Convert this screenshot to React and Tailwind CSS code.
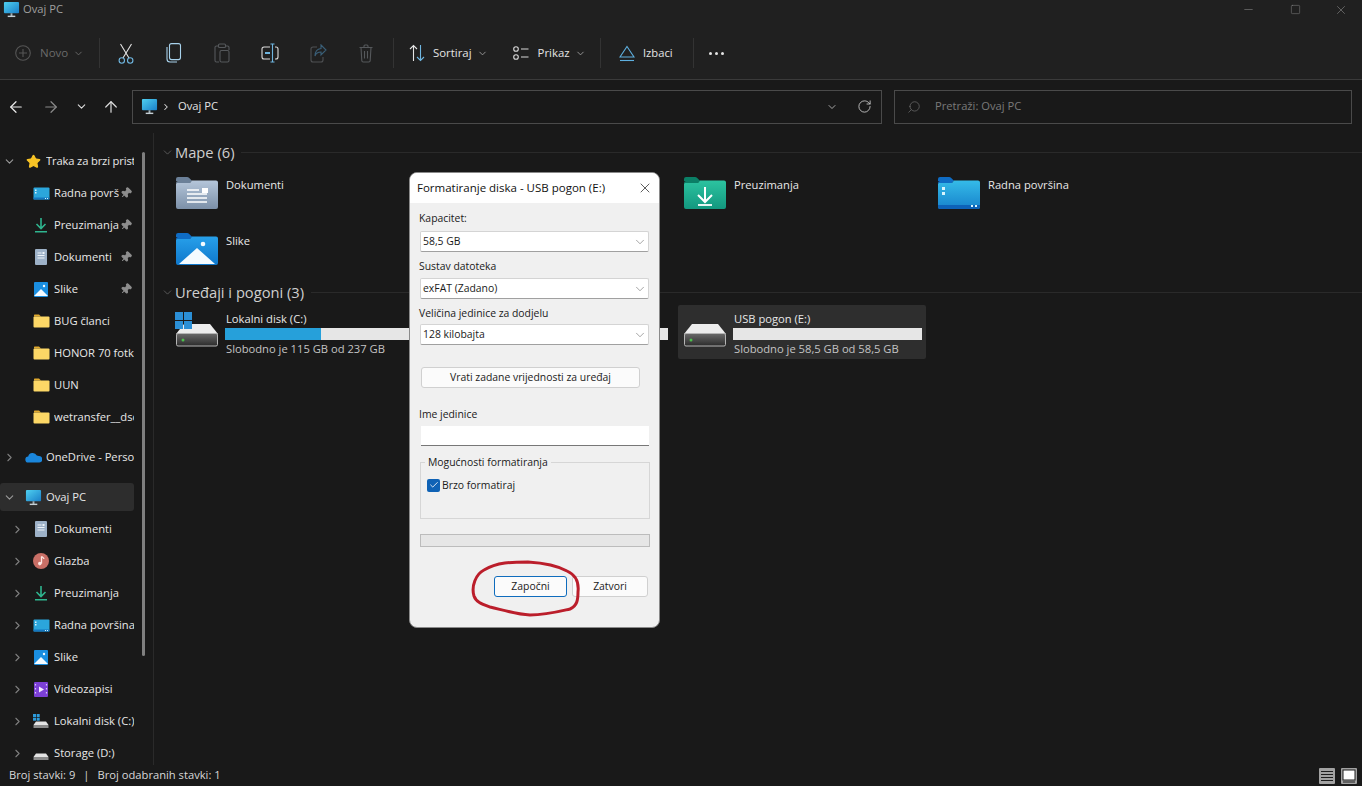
import React from "react";
import { ChevronDown, ChevronRight, ArrowLeft, ArrowRight, ArrowUp, RotateCw, Search, Pin, Star, X, Check, Minus, Square } from "lucide-react";

const FONT = "font-['Open_Sans','Noto_Sans',sans-serif]";

function PcIcon({ s = 17 }) {
  return (
    <svg width={s} height={s} viewBox="0 0 18 18" className="shrink-0">
      <defs>
        <linearGradient id="pcg" x1="0" y1="0" x2="1" y2="1"><stop offset="0" stopColor="#4fd0f0" /><stop offset="1" stopColor="#1a7fc8" /></linearGradient>
      </defs>
      <rect x="1" y="1" width="16" height="12" rx="1" fill="url(#pcg)" />
      <rect x="8" y="13" width="2" height="3" fill="#9fb0b8" />
      <rect x="5" y="15.5" width="8" height="1.5" fill="#c6d0d6" />
    </svg>
  );
}

function SmallFolder() {
  return (
    <svg width="17" height="14" viewBox="0 0 17 14" className="shrink-0">
      <path d="M1 1.5C1 .9 1.4.5 2 .5h4l2 2H1z" fill="#e0a92e" />
      <rect x="0.5" y="2.5" width="16" height="11" rx="1" fill="#fcd766" />
    </svg>
  );
}

function SmallDesktop() {
  return (
    <svg width="17" height="13" viewBox="0 0 17 13" className="shrink-0">
      <rect x="0.5" y="0.5" width="16" height="12" rx="1" fill="#2ba6dc" />
      <rect x="0.5" y="10.5" width="16" height="2" fill="#1577bf" />
      <rect x="2" y="2.5" width="1.5" height="1.5" fill="#d7f2fb" />
      <rect x="2" y="5" width="1.5" height="1.5" fill="#d7f2fb" />
      <rect x="12" y="11" width="1" height="1" fill="#d7f2fb" />
      <rect x="14" y="11" width="1" height="1" fill="#d7f2fb" />
    </svg>
  );
}
function SmallDownload() {
  return (
    <svg width="14" height="16" viewBox="0 0 14 16" className="shrink-0">
      <path d="M7 1v10M2.5 7 7 11.5 11.5 7" stroke="#2fb58f" strokeWidth="1.6" fill="none" />
      <rect x="1" y="14" width="12" height="1.5" fill="#2fb58f" />
    </svg>
  );
}
function SmallDoc() {
  return (
    <svg width="12" height="16" viewBox="0 0 12 16" className="shrink-0">
      <rect width="12" height="16" rx="1" fill="#9db1c7" />
      <path d="M2.5 4h4M2.5 6.5h7M2.5 9h7" stroke="#eef3f8" strokeWidth="1" />
      <rect x="7.5" y="3" width="2" height="2" fill="#eef3f8" />
    </svg>
  );
}
function SmallPicture() {
  return (
    <svg width="14" height="15" viewBox="0 0 14 15" className="shrink-0">
      <rect width="14" height="15" rx="1" fill="#1a8ee0" />
      <path d="M0 14 7 7l7 7z" fill="#f4fbff" />
      <circle cx="10" cy="4" r="1.2" fill="#f4fbff" />
    </svg>
  );
}
function SmallMusic() {
  return (
    <svg width="16" height="16" viewBox="0 0 16 16" className="shrink-0">
      <circle cx="8" cy="8" r="8" fill="#c96f66" />
      <path d="M8.5 3.5v7" stroke="#fde8e4" strokeWidth="1.3" />
      <circle cx="6.8" cy="10.6" r="1.8" fill="#fde8e4" />
      <path d="M8.5 3.5c1 1 2.2 1 2.5 2.5" stroke="#fde8e4" strokeWidth="1.2" fill="none" />
    </svg>
  );
}
function SmallVideo() {
  return (
    <svg width="14" height="15" viewBox="0 0 14 15" className="shrink-0">
      <rect width="14" height="15" rx="1" fill="#7c3fd6" />
      <path d="M5 4.5v6l5-3z" fill="#f3e9ff" />
      <path d="M1.5 2v1.5M1.5 6v1.5M1.5 10v1.5M12.5 2v1.5M12.5 6v1.5M12.5 10v1.5" stroke="#d9c6f8" strokeWidth="1.2" />
    </svg>
  );
}
function SmallDisk({ win }) {
  return (
    <svg width="16" height="15" viewBox="0 0 16 15" className="shrink-0">
      {win && <g fill="#2c9bdb"><rect x="0" y="0" width="3" height="3" /><rect x="3.7" y="0" width="3" height="3" /><rect x="0" y="3.7" width="3" height="3" /><rect x="3.7" y="3.7" width="3" height="3" /></g>}
      <path d="M3 7.5h10l2.5 3.5h-15z" fill="#e3e3e3" />
      <rect x="0.5" y="11" width="15" height="3" fill="#8a8a8a" />
    </svg>
  );
}
function OneDrive() {
  return (
    <svg width="17" height="11" viewBox="0 0 17 11" className="shrink-0">
      <path d="M3.5 10.5a3 3 0 0 1-.3-6 4.6 4.6 0 0 1 8.6-1 3.6 3.6 0 0 1 2 .6 3.2 3.2 0 0 1 .5 6.4z" fill="#1a86dc" />
    </svg>
  );
}

function BigFolder({ id, tab, from, to, children }) {
  return (
    <svg width="42" height="34" viewBox="0 0 42 34" className="shrink-0">
      <defs>
        <linearGradient id={id} x1="0" y1="0" x2="0" y2="1"><stop offset="0" stopColor={from} /><stop offset="1" stopColor={to} /></linearGradient>
      </defs>
      <path d="M0 3a2 2 0 0 1 2-2h9c1 0 1.600.4 2.200 1l3 3H0z" fill={tab} />
      <path d="M0 7a2 2 0 0 1 2-2h14l-2 2z" fill={tab} />
      <path d="M0 8a1 1 0 0 1 1-1h13l2-2.500h24a2 2 0 0 1 2 2V31a2 2 0 0 1-2 2H2a2 2 0 0 1-2-2z" fill={`url(#${id})`} />
      {children}
    </svg>
  );
}
const DocsFolder = () => (
  <BigFolder id="f1" tab="#6b8098" from="#b5c6da" to="#7c90a8">
    <path d="M11 14h12M11 18h20M11 22h20M11 26h20" stroke="#fff" strokeWidth="1.500" />
    <rect x="26" y="12" width="6" height="5" fill="#fff" />
  </BigFolder>
);
const PicsFolder = () => (
  <BigFolder id="f2" tab="#0f6cc4" from="#27a0ea" to="#0f78cc">
    <path d="M3 32 21 16l18 16z" fill="#f4fbff" />
    <circle cx="27" cy="12" r="2.300" fill="#f4fbff" />
  </BigFolder>
);
const DownFolder = () => (
  <BigFolder id="f3" tab="#0b7f66" from="#2cc3a0" to="#13987f">
    <path d="M21 11v14M14 19l7 7 7-7" stroke="#fff" strokeWidth="2" fill="none" />
    <path d="M14 29h14" stroke="#fff" strokeWidth="1.800" />
  </BigFolder>
);
const DeskFolder = () => (
  <BigFolder id="f4" tab="#0f6cc4" from="#35bbe8" to="#1783cc">
    <rect x="4" y="11" width="3" height="3" fill="#d9f5fd" />
    <rect x="4" y="16" width="3" height="3" fill="#d9f5fd" />
    <path d="M0 29h42v2a2 2 0 0 1-2 2H2a2 2 0 0 1-2-2z" fill="#0d62b8" />
    <rect x="33" y="29" width="2" height="2" fill="#d9f5fd" />
    <rect x="37" y="29" width="2" height="2" fill="#d9f5fd" />
  </BigFolder>
);

function BigDrive({ id, win }) {
  return (
    <svg width="42" height="36" viewBox="0 0 42 36" className="shrink-0 -mt-[4px] overflow-visible">
      <defs>
        <linearGradient id={id} x1="0" y1="0" x2="0" y2="1"><stop offset="0" stopColor="#6a6a6a" /><stop offset="1" stopColor="#2b2b2b" /></linearGradient>
      </defs>
      <path d="M8 12h26l8 10H0z" fill="#ededed" />
      <rect x="0.500" y="21.500" width="41" height="12.500" rx="1.500" fill={`url(#${id})`} stroke="#b5b5b5" />
      <circle cx="7" cy="28" r="1.500" fill="#4cc04c" />
      {win && (
        <g fill="#2b8fd6">
          <rect x="-1" y="0" width="8" height="8" />
          <rect x="8" y="0" width="8" height="8" />
          <rect x="-1" y="9" width="8" height="8" />
          <rect x="8" y="9" width="8" height="8" />
        </g>
      )}
    </svg>
  );
}

function ToolSep() {
  return <div className="w-px h-[30px] bg-[#333333] shrink-0" />;
}
function ToolBtn({ children }) {
  return <div className="w-[48px] h-[30px] flex items-center justify-center shrink-0">{children}</div>;
}

function CopyIcon({ c }) {
  return (
    <svg width="16" height="20" viewBox="0 0 16 20" fill="none" stroke={c} strokeWidth="1.100">
      <rect x="3.500" y="0.600" width="11" height="16" rx="2" />
      <path d="M1 4v12a3 3 0 0 0 3 3h7" />
    </svg>
  );
}
function PasteIcon({ c }) {
  return (
    <svg width="16" height="20" viewBox="0 0 16 20" fill="none" stroke={c} strokeWidth="1.100">
      <path d="M4 3H2.500A1.500 1.500 0 0 0 1 4.500v13A1.500 1.500 0 0 0 2.500 19H5M12 3h1.500A1.500 1.500 0 0 1 15 4.500V7" />
      <rect x="4.500" y="1" width="7" height="3.500" rx="1" />
      <rect x="6" y="7.500" width="9" height="11.500" rx="1.500" />
    </svg>
  );
}
function RenameIcon() {
  return (
    <svg width="18" height="20" viewBox="0 0 18 20" fill="none" strokeWidth="1.100">
      <path d="M9 4H3a2 2 0 0 0-2 2v8a2 2 0 0 0 2 2h6M14 4h1a2 2 0 0 1 2 2v8a2 2 0 0 1-2 2h-1" stroke="#dcdcdc" />
      <path d="M11.500 1v18M9.500 1h4M9.500 19h4" stroke="#6fb6e0" />
      <path d="M4 10h5" stroke="#6fb6e0" strokeWidth="2" />
    </svg>
  );
}
function ShareIcon() {
  return (
    <svg width="17" height="19" viewBox="0 0 17 19" fill="none" stroke="#4e5053" strokeWidth="1.100">
      <path d="M7 3H3a2 2 0 0 0-2 2v11a2 2 0 0 0 2 2h8a2 2 0 0 0 2-2v-3" />
      <path d="M11 1l5 5-5 5V8c-3 0-5 1-6 4 0-5 2-7 6-7.500z" stroke="#3a5f78" />
    </svg>
  );
}
function TrashIcon() {
  return (
    <svg width="14" height="19" viewBox="0 0 14 19" fill="none" stroke="#55585b" strokeWidth="1.100">
      <path d="M0.500 3.500h13M5 3.500V2a1 1 0 0 1 1-1h2a1 1 0 0 1 1 1v1.500" />
      <path d="M2 3.500l.8 13a1.500 1.500 0 0 0 1.500 1.500h5.400a1.500 1.500 0 0 0 1.500-1.500l.8-13" />
      <path d="M5.500 7v7.500M8.500 7v7.500" />
    </svg>
  );
}
function SortIcon() {
  return (
    <svg width="16" height="18" viewBox="0 0 16 18" fill="none" strokeWidth="1.100">
      <path d="M4.500 17V1.500M1 5l3.500-3.500L8 5" stroke="#e4e4e4" />
      <path d="M11.500 1v15.500M8 13l3.500 3.500L15 13" stroke="#6fb6e0" />
    </svg>
  );
}
function ViewIcon() {
  return (
    <svg width="16" height="14" viewBox="0 0 16 14" fill="none" stroke="#d8d8d8" strokeWidth="1.100">
      <circle cx="3" cy="3" r="2.300" />
      <circle cx="3" cy="11" r="2.300" />
      <path d="M8 3h7.500M8 11h7.500" />
    </svg>
  );
}
function EjectIcon() {
  return (
    <svg width="16" height="17" viewBox="0 0 16 17" fill="none" stroke="#5eb0e0" strokeWidth="1.100">
      <path d="M8 1.500 15 12H1z" />
      <path d="M1 15.500h14" />
    </svg>
  );
}

function TreeRow({ chev, indent, icon, label, pin, active, tight }) {
  const top = !indent;
  return (
    <div className="h-[32px] w-[134px] flex items-center relative overflow-hidden shrink-0">
      {active && <div className="absolute left-0 right-0 top-[2px] bottom-[2px] bg-[#2d2d2d] rounded-[3px]" />}
      <div className={`relative shrink-0 flex items-center justify-center ${top ? "w-[18px]" : "w-[26px] pl-[8px]"}`}>
        {chev === "down" && <ChevronDown size={13} color="#9a9a9a" strokeWidth={2} />}
        {chev === "right" && <ChevronRight size={13} color="#7f7f7f" strokeWidth={2} />}
      </div>
      <div className={`relative shrink-0 flex items-center justify-center ${top ? "w-[16px] ml-[7px] mr-[5px]" : "w-[18px] ml-[6px] mr-[4px]"}`}>{icon}</div>
      <div className={`relative whitespace-nowrap overflow-hidden text-[11.2px] text-[#e8e8e8] ${pin ? "w-[65px]" : ""} ${tight ? "tracking-[-0.15px]" : ""}`}>{label}</div>
      {pin && (
        <div className="absolute right-[2px] top-[10px]">
          <Pin size={12} color="#8d8d8d" fill="#8d8d8d" className="rotate-45" />
        </div>
      )}
    </div>
  );
}

function Section({ title, children }) {
  return (
    <div>
      <div className="h-[20px] flex items-center">
        <ChevronDown size={13} color="#777777" strokeWidth={1.200} className="mr-[1px] shrink-0" />
        <span className="text-[14.7px] text-[#cfcfcf] whitespace-nowrap">{title}</span>
        <div className="h-px flex-1 bg-[#2a2a2a] ml-[7px]" />
      </div>
      {children}
    </div>
  );
}

function FolderItem({ icon, label }) {
  return (
    <div className="h-[56px] w-[248px] pl-[8px] pt-[4px] flex items-start gap-[8px]">
      <div className="mt-[2px]">{icon}</div>
      <span className="text-[11.2px] text-[#e8e8e8] mt-[3px] leading-[16px]">{label}</span>
    </div>
  );
}

function DriveItem({ icon, name, used, sub, selected }) {
  return (
    <div className={`h-[54px] w-[248px] pl-[6px] flex items-center gap-[8px] rounded-[2px] ${selected ? "bg-[#2e2e2e]" : ""}`}>
      {icon}
      <div className="flex-1 pr-[4px] pt-[3px]">
        <div className="h-[16px] text-[11.2px] text-[#e8e8e8] leading-[16px]">{name}</div>
        <div className="h-[12px] bg-[#e6e6e6] mt-[1px] -ml-[1px]">
          <div className="h-full bg-[#26a0da]" style={{ width: used }} />
        </div>
        <div className="h-[16px] text-[11.2px] text-[#c4c4c4] leading-[16px] mt-[1px]">{sub}</div>
      </div>
    </div>
  );
}

function Select({ value }) {
  return (
    <div className="h-[21px] w-[229px] ml-[1px] bg-white border border-[#d4d4d4] border-b-[#a0a0a0] rounded-[2px] flex items-center pl-[2px] pr-[1px]">
      <span className="flex-1 text-[#1a1a1a]">{value}</span>
      <ChevronDown size={14} color="#666666" strokeWidth={1} />
    </div>
  );
}

function Dialog() {
  return (
    <div className="absolute left-[409px] top-[172px] w-[251px] h-[456px] rounded-[8px] overflow-hidden bg-[#f0f0f0] border border-[#8a8a8a] text-[10.4px] text-[#1a1a1a] flex flex-col">
      <div className="h-[30px] bg-white flex items-center pl-[7px] pr-[6px] shrink-0">
        <span className="flex-1 text-[11.5px] text-[#111111] whitespace-nowrap">Formatiranje diska - USB pogon (E:)</span>
        <X size={16} color="#222222" strokeWidth={1.100} />
      </div>
      <div className="pl-[9px] flex-1 flex flex-col">
        <div className="h-[14px] mt-[8px] leading-[14px]">Kapacitet:</div>
        <div className="mt-[6px]"><Select value="58,5 GB" /></div>
        <div className="h-[14px] mt-[7px] leading-[14px]">Sustav datoteka</div>
        <div className="mt-[5px]"><Select value="exFAT (Zadano)" /></div>
        <div className="h-[14px] mt-[7px] leading-[14px]">Veličina jedinice za dodjelu</div>
        <div className="mt-[4px]"><Select value="128 kilobajta" /></div>
        <div className="h-[21px] w-[219px] ml-[2px] mt-[22px] bg-[#fbfbfb] border border-[#d0d0d0] rounded-[3px] flex items-center justify-center">Vrati zadane vrijednosti za uređaj</div>
        <div className="h-[14px] mt-[19px] leading-[14px]">Ime jedinice</div>
        <div className="h-[20px] w-[228px] ml-[2px] mt-[5px] bg-white border-b border-b-[#777777]" />
        <div className="relative w-[230px] h-[57px] mt-[16px] ml-[1px] border border-[#d6d6d6]">
          <span className="absolute left-[4px] top-[-8px] px-[3px] bg-[#f0f0f0] leading-[14px]">Mogućnosti formatiranja</span>
          <div className="flex items-center mt-[15px] ml-[6px]">
            <div className="w-[13px] h-[13px] rounded-[2px] bg-[#0f62b5] flex items-center justify-center shrink-0">
              <Check size={10} color="#ffffff" strokeWidth={2} />
            </div>
            <span className="ml-[2px] leading-[14px]">Brzo formatiraj</span>
          </div>
        </div>
        <div className="w-[230px] h-[13px] mt-[15px] ml-[1px] bg-[#e6e6e6] border border-[#bcbcbc]" />
        <div className="flex mt-[29px] ml-[75px]">
          <div className="w-[73px] h-[21px] rounded-[3px] bg-[#fbfbfb] border border-[#0f6cbd] flex items-center justify-center">Započni</div>
          <div className="w-[76px] h-[21px] ml-[5px] rounded-[3px] bg-[#fbfbfb] border border-[#d0d0d0] flex items-center justify-center">Zatvori</div>
        </div>
      </div>
    </div>
  );
}

export default function App() {
  return (
    <div className={`relative w-[1362px] h-[786px] overflow-hidden flex flex-col bg-[#191919] ${FONT}`}>
      <div className="h-[80px] bg-[#202020] border-b border-[#3a3a3a] shrink-0 flex flex-col">
        <div className="h-[27px] pb-[8px] flex items-center shrink-0 pl-[3px]">
          <PcIcon s={17} />
          <span className="text-[11.2px] text-[#9f9f9f] ml-[3px]">Ovaj PC</span>
          <div className="flex-1" />
          <div className="flex items-center">
            <Minus size={13} color="#8f8f8f" strokeWidth={1} className="mr-[35px]" />
            <Square size={11} color="#8f8f8f" strokeWidth={1} className="mr-[33px]" />
            <X size={14} color="#8f8f8f" strokeWidth={1} className="mr-[14px]" />
          </div>
        </div>
        <div className="flex-1 flex items-center">
          <div className="w-[99px] flex items-center shrink-0 pl-[15px]">
            <svg width="16" height="16" viewBox="0 0 16 16" fill="none" stroke="#555555" strokeWidth="1.100">
              <circle cx="8" cy="8" r="7.300" /><path d="M8 4v8M4 8h8" />
            </svg>
            <span className="text-[11.5px] text-[#6b6b6b] ml-[9px]">Novo</span>
            <ChevronDown size={11} color="#6b6b6b" className="ml-[5px]" />
          </div>
          <ToolSep />
          <div className="w-[2px] shrink-0" />
          <ToolBtn>
            <svg width="16" height="21" viewBox="0 0 16 21" fill="none" strokeWidth="1.100">
              <path d="M2.500 1 11 15M13.500 1 5 15" stroke="#e4e4e4" />
              <circle cx="3.800" cy="17.500" r="2.700" stroke="#6fb6e0" />
              <circle cx="12.200" cy="17.500" r="2.700" stroke="#6fb6e0" />
            </svg>
          </ToolBtn>
          <ToolBtn><CopyIcon c="#a8d2ec" /></ToolBtn>
          <ToolBtn><PasteIcon c="#55585b" /></ToolBtn>
          <ToolBtn><RenameIcon /></ToolBtn>
          <ToolBtn><ShareIcon /></ToolBtn>
          <ToolBtn><TrashIcon /></ToolBtn>
          <div className="w-[3px] shrink-0" />
          <ToolSep />
          <div className="w-[206px] flex items-center shrink-0 pl-[15px]">
            <SortIcon />
            <span className="text-[11.4px] font-medium text-[#e4e4e4] ml-[8px]">Sortiraj</span>
            <ChevronDown size={11} color="#9a9a9a" className="ml-[5px]" />
            <div className="ml-[25px]"><ViewIcon /></div>
            <span className="text-[11.4px] font-medium text-[#e4e4e4] ml-[9px]">Prikaz</span>
            <ChevronDown size={11} color="#9a9a9a" className="ml-[5px]" />
          </div>
          <ToolSep />
          <div className="w-[92px] flex items-center shrink-0 pl-[18px]">
            <EjectIcon />
            <span className="text-[11.2px] font-medium text-[#e4e4e4] ml-[8px]">Izbaci</span>
          </div>
          <ToolSep />
          <div className="ml-[15px] flex gap-[3px]">
            <div className="w-[3px] h-[3px] rounded-full bg-[#e4e4e4]" />
            <div className="w-[3px] h-[3px] rounded-full bg-[#e4e4e4]" />
            <div className="w-[3px] h-[3px] rounded-full bg-[#e4e4e4]" />
          </div>
        </div>
      </div>

      <div className="h-[53px] shrink-0 flex items-center">
        <div className="w-[132px] flex items-center shrink-0 pl-[7px]">
          <ArrowLeft size={18} color="#ececec" strokeWidth={1.600} />
          <ArrowRight size={18} color="#8a8a8a" strokeWidth={1.600} className="ml-[17px]" />
          <ChevronDown size={13} color="#dcdcdc" strokeWidth={2} className="ml-[15px]" />
          <ArrowUp size={18} color="#dcdcdc" strokeWidth={1.600} className="ml-[14px]" />
        </div>
        <div className="w-[750px] h-[34px] border border-[#4a4a4a] flex items-center pl-[8px] shrink-0">
          <PcIcon s={17} />
          <ChevronRight size={10} color="#dcdcdc" strokeWidth={2.500} className="ml-[3px]" />
          <span className="text-[11.2px] text-[#e4e4e4] ml-[7px]">Ovaj PC</span>
          <div className="flex-1" />
          <ChevronDown size={12} color="#c8c8c8" strokeWidth={1.600} />
          <RotateCw size={15} color="#c8c8c8" strokeWidth={1.400} className="ml-[19px] mr-[9px]" />
        </div>
        <div className="w-[458px] h-[34px] ml-[12px] border border-[#4a4a4a] flex items-center pl-[12px] shrink-0">
          <Search size={14} color="#6a6a6a" strokeWidth={1.300} className="-scale-x-100" />
          <span className="text-[11.2px] text-[#7a7a7a] ml-[14px]">Pretraži: Ovaj PC</span>
        </div>
      </div>

      <div className="flex-1 min-h-0 flex relative">
        <div className="w-[154px] shrink-0 border-r border-[#2a2a2a] pt-[12px] overflow-hidden flex flex-col relative">
          <TreeRow tight chev="down" icon={<Star size={15} color="#f7c325" fill="#f7c325" />} label="Traka za brzi pristup" />
          <TreeRow indent icon={<SmallDesktop />} label="Radna površina" pin />
          <TreeRow indent icon={<SmallDownload />} label="Preuzimanja" pin />
          <TreeRow indent icon={<SmallDoc />} label="Dokumenti" pin />
          <TreeRow indent icon={<SmallPicture />} label="Slike" pin />
          <TreeRow indent icon={<SmallFolder />} label="BUG članci" />
          <TreeRow indent icon={<SmallFolder />} label="HONOR 70 fotke" />
          <TreeRow indent icon={<SmallFolder />} label="UUN" />
          <TreeRow indent icon={<SmallFolder />} label="wetransfer__dsc" />
          <div className="h-[8px] shrink-0" />
          <TreeRow chev="right" icon={<OneDrive />} label="OneDrive - Personal" />
          <div className="h-[8px] shrink-0" />
          <TreeRow chev="down" active icon={<PcIcon s={17} />} label="Ovaj PC" />
          <TreeRow indent chev="right" icon={<SmallDoc />} label="Dokumenti" />
          <TreeRow indent chev="right" icon={<SmallMusic />} label="Glazba" />
          <TreeRow indent chev="right" icon={<SmallDownload />} label="Preuzimanja" />
          <TreeRow indent chev="right" icon={<SmallDesktop />} label="Radna površina" />
          <TreeRow indent chev="right" icon={<SmallPicture />} label="Slike" />
          <TreeRow indent chev="right" icon={<SmallVideo />} label="Videozapisi" />
          <TreeRow indent chev="right" icon={<SmallDisk win />} label="Lokalni disk (C:)" />
          <TreeRow indent chev="right" icon={<SmallDisk />} label="Storage (D:)" />
          <div className="absolute left-[142px] top-[19px] w-[3px] h-[504px] bg-[#7f7f7f] rounded-full" />
        </div>
        <div className="flex-1 pl-[7px] pt-[9px] min-w-0">
          <Section title="Mape (6)">
            <div className="grid grid-cols-[repeat(4,254px)] pl-[7px] mt-[8px]">
              <FolderItem icon={<DocsFolder />} label="Dokumenti" />
              <div />
              <FolderItem icon={<DownFolder />} label="Preuzimanja" />
              <FolderItem icon={<DeskFolder />} label="Radna površina" />
              <FolderItem icon={<PicsFolder />} label="Slike" />
            </div>
          </Section>
          <Section title="Uređaji i pogoni (3)">
            <div className="grid grid-cols-[repeat(4,254px)] pl-[9px] mt-[3px]">
              <DriveItem icon={<BigDrive id="d1" win />} name="Lokalni disk (C:)" used="51%" sub="Slobodno je 115 GB od 237 GB" />
              <DriveItem icon={<BigDrive id="d2" />} used="0%" />
              <DriveItem selected icon={<BigDrive id="d3" />} name="USB pogon (E:)" used="0%" sub="Slobodno je 58,5 GB od 58,5 GB" />
            </div>
          </Section>
        </div>
      </div>

      <div className="h-[21px] shrink-0 bg-[#191919] flex items-center pl-[9px] text-[11.2px] text-[#d8d8d8]">
        <span>Broj stavki: 9</span>
        <span className="mx-[8px]">|</span>
        <span>Broj odabranih stavki: 1</span>
        <div className="flex-1" />
        <svg width="16" height="16" viewBox="0 0 16 16" className="mr-[6px]">
          <rect width="16" height="16" rx="1" fill="#a2a2a2" />
          <path d="M2 3.500h12M2 6.500h12M2 9.500h12M2 12.500h12" stroke="#1e1e1e" strokeWidth="1" />
        </svg>
        <svg width="16" height="16" viewBox="0 0 16 16" className="mr-[5px]">
          <rect width="16" height="16" rx="1" fill="#a2a2a2" />
          <rect x="2" y="2" width="12" height="10" fill="#ffffff" stroke="#1e1e1e" strokeWidth="1" />
          <path d="M2 14h12" stroke="#1e1e1e" strokeWidth="1" />
        </svg>
      </div>

      <Dialog />

      <svg width="1362" height="786" className="absolute left-0 top-0 pointer-events-none">
        <path d="M474 596C471 586 476 574 484 570C497 562 512 562 528 562C545 563 558 566 567 571C576 575 579 583 578 592C578 600 577 606 570 609C557 612 546 615 530 615C515 614 503 610 490 607C482 604 476 602 474 596Z" fill="none" stroke="#bb1e2b" strokeWidth="3" />
      </svg>
    </div>
  );
}
